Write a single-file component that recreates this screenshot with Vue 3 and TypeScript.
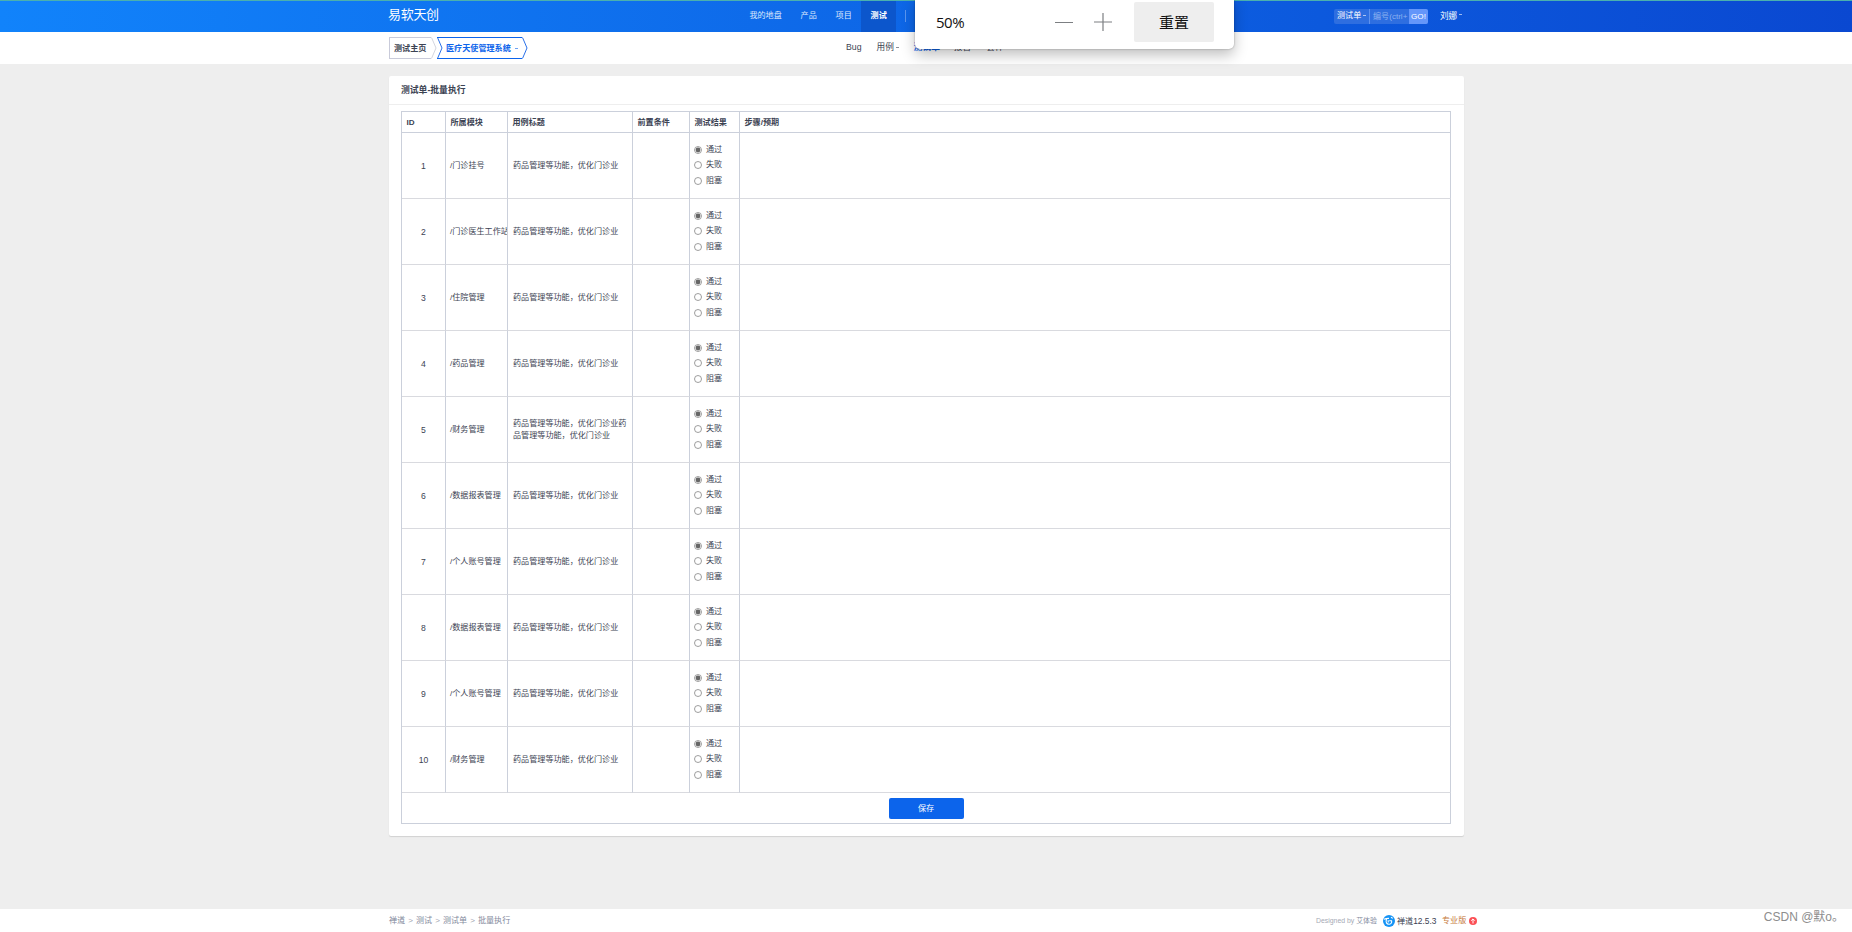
<script setup lang="ts">
import { ref } from 'vue'

interface CaseRow {
  id: number
  module: string
  title: string
  result: string
}

const title = '药品管理等功能，优化门诊业'
const modules = ['门诊挂号', '门诊医生工作站', '住院管理', '药品管理', '财务管理', '数据报表管理', '个人账号管理', '数据报表管理', '个人账号管理', '财务管理']
const results = ['通过', '失败', '阻塞']
const columns = ['ID', '所属模块', '用例标题', '前置条件', '测试结果', '步骤/预期']
const nav = ['我的地盘', '产品', '项目', '测试']
const trail = ['禅道', '测试', '测试单', '批量执行']

const rows = ref<CaseRow[]>(
  modules.map((name, i) => ({
    id: i + 1,
    module: '/' + name,
    title: i === 4 ? title + title : title,
    result: '通过',
  })),
)
</script>

<template>
  <div class="page">
    <header class="top">
      <div class="wrap top-row">
        <div class="brand">易软天创</div>
        <nav class="nav">
          <a v-for="n in nav" :key="n" :class="{ on: n === '测试' }">{{ n }}</a>
          <i class="sep"></i>
        </nav>
        <div class="tools">
          <div class="search">
            <span class="kind">测试单<i class="caret"></i></span>
            <span class="field">编号(ctrl+</span>
            <span class="go">GO!</span>
          </div>
          <span class="user">刘娜<i class="caret"></i></span>
        </div>
      </div>
    </header>

    <div class="sub">
      <div class="wrap sub-row">
        <div class="crumbs">
          <div class="crumb home">测试主页</div>
          <svg class="tip" width="6" height="22" viewBox="0 0 6 22"><path d="M.5 .5 5 11 .5 21.5" fill="none" stroke="#d3d6de" /></svg>
          <svg class="tip lead" width="6" height="22" viewBox="0 0 6 22"><path d="M.5 .5 5 11 .5 21.5" fill="none" stroke="#2a70e8" /></svg>
          <div class="crumb current">医疗天使管理系统<i class="caret"></i></div>
          <svg class="tip" width="6" height="22" viewBox="0 0 6 22"><path d="M.5 .5 5 11 .5 21.5" fill="none" stroke="#2a70e8" /></svg>
        </div>
        <nav class="subnav">
          <a>Bug</a>
          <a>用例<i class="caret"></i></a>
          <a class="on">测试单</a>
          <a>报告</a>
          <a>套件</a>
        </nav>
      </div>
    </div>

    <main class="card">
      <h1>测试单-批量执行</h1>
      <div class="table">
        <div class="row head">
          <div v-for="c in columns" :key="c" class="cell">{{ c }}</div>
        </div>
        <div v-for="r in rows" :key="r.id" class="row">
          <div class="cell id">{{ r.id }}</div>
          <div class="cell module">{{ r.module }}</div>
          <div class="cell"><span>{{ r.title }}</span></div>
          <div class="cell"></div>
          <div class="cell results">
            <label v-for="o in results" :key="o" @click="r.result = o">
              <svg width="8" height="8" viewBox="0 0 8 8">
                <circle cx="4" cy="4" r="3.5" fill="#fff" stroke="#858585" stroke-width=".8" />
                <circle v-if="r.result === o" cx="4" cy="4" r="2.4" fill="#666" />
              </svg>
              {{ o }}
            </label>
          </div>
          <div class="cell"></div>
        </div>
        <div class="foot"><button type="button">保存</button></div>
      </div>
    </main>

    <footer class="bottom">
      <div class="wrap bottom-row">
        <div class="trail">
          <template v-for="(t, i) in trail" :key="t">
            <i v-if="i">&gt;</i><a>{{ t }}</a>
          </template>
        </div>
        <div class="about">
          <span class="by">Designed by <b>艾体验</b></span>
          <svg class="logo" width="12" height="12" viewBox="0 0 12 12">
            <circle cx="6" cy="6" r="6" fill="#1593f5" />
            <path d="M1 4.3c2-.9 3.500-1 5-.9M3.600 4.300C2.200 7 3.700 9.500 6.300 9.200 8.200 9 9 7.400 8.600 5.800H6.200M5.200 5.200v2.300M8 2.200l1.800 1.200" fill="none" stroke="#fff" stroke-width="1.100" />
          </svg>
          <span class="version">禅道<em>12.5.3</em></span>
          <span class="pro">专业版</span>
          <svg width="8" height="8" viewBox="0 0 8 8">
            <circle cx="4" cy="4" r="4" fill="#fb4f55" />
            <path d="M4 6.500V2M2.200 3.700 4 1.900l1.800 1.800" fill="none" stroke="#fff" stroke-width="1" />
          </svg>
        </div>
      </div>
    </footer>

    <div class="zoom">
      <span class="level">50%</span>
      <svg class="minus" width="18" height="18" viewBox="0 0 18 18"><path d="M0 9.500h18" stroke="#7c7f82" /></svg>
      <svg class="plus" width="18" height="18" viewBox="0 0 18 18"><path d="M0 9h18M9 0v18" stroke="#7c7f82" stroke-width="1.200" /></svg>
      <button type="button">重置</button>
    </div>
    <div class="mark">CSDN @默o。</div>
  </div>
</template>

<style>
body {
  margin: 0;
  overflow: hidden;
}
</style>

<style scoped>
.page {
  position: relative;
  display: flex;
  flex-direction: column;
  width: 1852px;
  height: 932px;
  overflow: hidden;
  background: #eee;
  color: #3c4353;
  font: 8.1px/12px "Liberation Sans", "Noto Sans CJK SC", sans-serif;
}
.page *, .page { box-sizing: border-box; }
i, em { font-style: normal; }
.wrap {
  width: 1075px;
  margin-left: 389px;
}
.caret {
  display: inline-block;
  width: 3px;
  height: 1px;
  margin-left: 3px;
  vertical-align: 2px;
  background: currentColor;
  opacity: .6;
}
.top {
  height: 32px;
  border-top: 1px solid #4bb0ae;
  background: linear-gradient(90deg, #1183fb, #0a48d1);
  color: #fff;
}
.top-row { display: flex; height: 31px; }
.brand {
  width: 351px;
  font-size: 13px;
  line-height: 28px;
  letter-spacing: -.3px;
  text-indent: -1px;
}
.nav { display: flex; width: 594px; line-height: 29px; color: #dce8fd; }
.nav a { padding: 0 9.4px; }
.nav .on { background: #0c56cc; color: #fff; font-weight: 700; }
.sep { width: 1px; height: 12px; margin: 9px 0 0 9px; background: #5a96f0; }
.tools { display: flex; line-height: 14px; padding-top: 8px; }
.search {
  display: flex;
  width: 94px;
  height: 15px;
  border-radius: 2px;
  overflow: hidden;
  background: #2e6ee0;
}
.kind { width: 36px; padding-left: 3px; border-right: 1px solid #5f92ee; white-space: nowrap; }
.kind .caret { margin-left: 2px; }
.field { width: 39px; padding-left: 3px; line-height: 15px; color: #8bb0f0; white-space: nowrap; overflow: hidden; }
.go { width: 19px; background: #6496fa; text-align: center; line-height: 15px; }
.user { padding-left: 12px; line-height: 15px; white-space: nowrap; font-size: 8.6px; }
.user .caret { margin-left: 2px; vertical-align: 4px; }

.sub { height: 32px; background: #fff; }
.sub-row { display: flex; }
.crumbs { display: flex; width: 457px; padding-top: 5px; font-weight: 700; line-height: 22px; }
.crumb { height: 22px; border: solid #c9cbda; border-width: 1px 0; white-space: nowrap; }
.home { width: 42px; padding-left: 4px; border-left-width: 1px; }
.current { width: 85px; padding-left: 9px; border-color: #0c64eb; color: #0c64eb; }
.current .caret { margin-left: 4px; }
.lead { margin-right: -6px; }
.subnav { display: flex; gap: 15px; line-height: 30px; font-size: 8.7px; }
.subnav a { white-space: nowrap; }
.subnav .caret { margin-left: 2px; }
.subnav .on { width: 25px; color: #0c64eb; font-weight: 700; }

.card {
  width: 1075px;
  height: 760px;
  margin: 12px 0 0 389px;
  border-radius: 2px;
  background: #fff;
  box-shadow: 0 1px 1px rgba(0, 0, 0, .12);
}
h1 {
  height: 29px;
  margin: 0 0 6px;
  padding-left: 12px;
  border-bottom: 1px solid #eee;
  font-size: 8.8px;
  line-height: 28px;
}
.table {
  width: 1050px;
  margin-left: 12px;
  border: solid #cbd0db;
  border-width: 1px 0 0 1px;
}
.row {
  display: grid;
  grid-template-columns: 44px 62px 125px 57px 50px 711px;
  height: 66px;
}
.head { height: 21px; font-weight: 700; }
.cell {
  display: flex;
  align-items: center;
  min-width: 0;
  padding: 0 3px 0 5px;
  border: solid #cbd0db;
  border-width: 0 1px 1px 0;
}
.head .cell { padding: 1px 0 0 4.5px; }
.row:not(.head) .cell { border-bottom-color: #d9dadf; }
.row .id { justify-content: center; padding: 0; font-size: 8.6px; }
.row .module { overflow: hidden; padding: 0 0 0 4px; white-space: nowrap; }
.row .results { flex-direction: column; justify-content: center; align-items: flex-start; padding: 0 0 0 4px; }
.results label { display: flex; align-items: center; gap: 4px; height: 15.8px; }
.foot {
  display: flex;
  justify-content: center;
  height: 31px;
  padding-top: 5px;
  border: solid #cbd0db;
  border-width: 0 1px 1px 0;
}
.foot button {
  width: 75px;
  height: 21px;
  padding: 0;
  border: 0;
  border-radius: 2px;
  background: #0c64eb;
  color: #fff;
  font: inherit;
}

.bottom { height: 23px; margin-top: auto; background: #fff; color: #838a9d; }
.bottom-row { display: flex; align-items: center; height: 23px; padding-top: 1px; }
.trail { display: flex; flex-shrink: 0; width: 927px; line-height: 12px; }
.trail i { margin: 0 3px; color: #a0a4b0; }
.about { display: flex; flex-shrink: 0; align-items: center; white-space: nowrap; }
.by { width: 67px; font-size: 6.9px; color: #a6aab5; }
.by b { font-weight: 400; color: #838a9d; }
.version { width: 47px; padding-left: 2px; color: #3c4353; }
.version em { font-size: 8.4px; }
.pro { width: 27px; color: #c67a3c; }

.zoom {
  position: absolute;
  top: -4px;
  left: 915px;
  display: flex;
  align-items: center;
  width: 319px;
  height: 53px;
  padding: 0 0 2px 21px;
  border-radius: 5px;
  background: #fff;
  box-shadow: 0 0 2px rgba(0, 0, 0, .35), 0 6px 14px rgba(0, 0, 0, .25);
  color: #111;
}
.level { width: 119px; font: 15px/20px "Open Sans", "Noto Sans", sans-serif; letter-spacing: -.5px; }
.plus { margin: 0 22px 0 21px; }
.zoom button {
  width: 80px;
  height: 40px;
  padding: 0;
  border: 0;
  border-radius: 2px;
  background: #eee;
  color: #111;
  font: 15px/36px "Noto Sans CJK SC", sans-serif;
}
.mark {
  position: absolute;
  right: 8px;
  bottom: 6px;
  color: #8d8d8d;
  font-size: 12px;
  line-height: 18px;
}
</style>
